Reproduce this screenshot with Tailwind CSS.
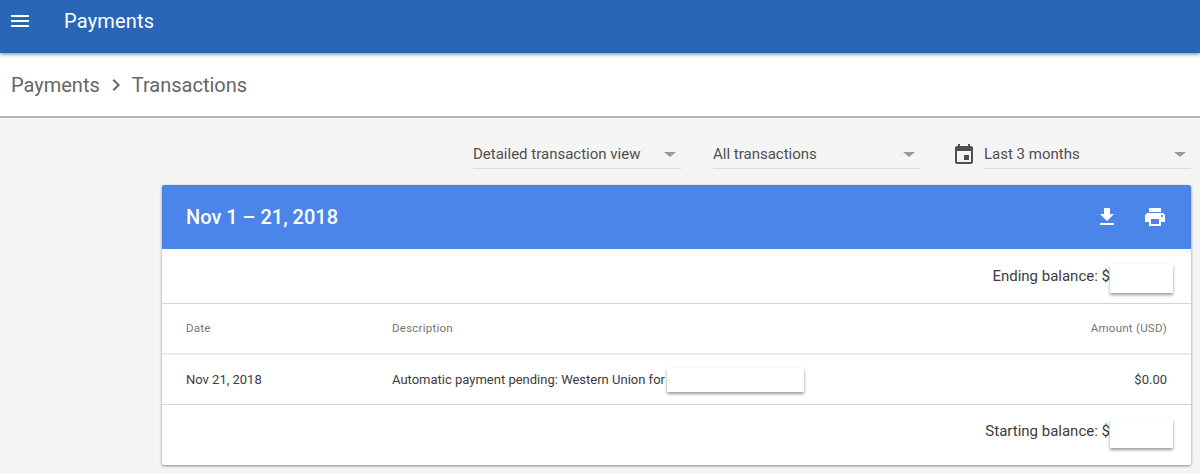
<!DOCTYPE html>
<html lang="en">
<head>
  <meta charset="UTF-8" />
  <title>Payments</title>
  <script src="https://cdn.jsdelivr.net/npm/@tailwindcss/browser@4"></script>
</head>
<body class="h-[474px] w-[1200px] overflow-hidden bg-[#f5f5f5] font-['Roboto',sans-serif]">

  <!-- App bar -->
  <header class="relative z-20 flex h-[53px] items-start bg-[#2a66b8] shadow-[0_1px_4px_rgba(0,0,0,0.5)]">
    <svg class="ml-[8px] mt-[9px] h-6 w-6" viewBox="0 0 24 24" fill="#fff"><path d="M3 18h18v-2H3v2zm0-5h18v-2H3v2zm0-7v2h18V6H3z"/></svg>
    <h1 class="ml-[32px] mt-[9px] text-[20px] leading-6 tracking-[0.2px] text-white">Payments</h1>
  </header>

  <!-- Breadcrumb -->
  <nav class="relative z-10 flex h-[65px] items-center border-b-2 border-[#b5b5b5] bg-white pl-[11px] text-[20px] text-[#666666]">
    <span>Payments</span>
    <svg class="mx-[4px] h-6 w-6" viewBox="0 0 24 24" fill="#666666"><path d="M10 6 8.600 7.400l4.600 4.600-4.600 4.600L10 18l6-6z"/></svg>
    <span>Transactions</span>
  </nav>

  <!-- Filters -->
  <div class="flex h-[67px] items-end pb-[16px] pl-[473px] text-[15px] text-[#4f4f4f]">
    <div class="flex h-[30px] w-[208px] items-center justify-between border-b border-[#dcdcdc] pt-[2px] pr-[5px]">
      <span>Detailed transaction view</span>
      <span class="h-0 w-0 border-x-[6px] border-t-[5px] border-x-transparent border-t-[#9a9a9a]"></span>
    </div>
    <div class="ml-[32px] flex h-[30px] w-[207px] items-center justify-between border-b border-[#dcdcdc] pt-[2px] pr-[5px]">
      <span>All transactions</span>
      <span class="h-0 w-0 border-x-[6px] border-t-[5px] border-x-transparent border-t-[#9a9a9a]"></span>
    </div>
    <svg class="ml-[32px] mb-[2px] h-6 w-6 self-end" viewBox="0 0 24 24" fill="#4f4f4f"><path d="M17 12h-5v5h5v-5zM16 1v2H8V1H6v2H5c-1.100 0-2 .9-2 2v14c0 1.100.9 2 2 2h14c1.100 0 2-.9 2-2V5c0-1.100-.9-2-2-2h-1V1h-2zm3 18H5V8h14v11z"/></svg>
    <div class="ml-[8px] flex h-[30px] w-[207px] items-center justify-between border-b border-[#dcdcdc] pt-[2px] pr-[5px]">
      <span>Last 3 months</span>
      <span class="h-0 w-0 border-x-[6px] border-t-[5px] border-x-transparent border-t-[#9a9a9a]"></span>
    </div>
  </div>

  <!-- Statement card -->
  <section class="ml-[162px] w-[1029px] rounded-[2px] bg-white shadow-[0_1px_3px_rgba(0,0,0,0.45)]">
    <div class="flex h-[64px] items-center justify-between rounded-t-[2px] bg-[#4c85ea] pl-[24px] pr-[24px] text-white">
      <h2 class="text-[20px] font-medium leading-6">Nov 1 – 21, 2018</h2>
      <div class="flex items-center gap-[24px]">
        <svg class="h-6 w-6" viewBox="0 0 24 24" fill="#fff"><path d="M19 9h-4V3H9v6H5l7 7 7-7zM5 18v2h14v-2H5z"/></svg>
        <svg class="h-6 w-6" viewBox="0 0 24 24" fill="#fff"><path d="M19 8H5c-1.660 0-3 1.340-3 3v6h4v4h12v-4h4v-6c0-1.660-1.340-3-3-3zm-3 11H8v-5h8v5zm3-7c-.55 0-1-.45-1-1s.45-1 1-1 1 .45 1 1-.45 1-1 1zm-1-9H6v4h12V3z"/></svg>
      </div>
    </div>

    <div class="flex h-[55px] items-center justify-end border-b border-[#d4d4d4] pr-[18px] text-[15px] text-[#3c3c3c]">
      <span class="pt-[1px]">Ending balance: $</span>
      <span class="mt-[4px] h-[29px] w-[63px] bg-white shadow-[0_2px_3px_rgba(0,0,0,0.4)]"></span>
    </div>

    <div class="flex h-[51px] items-center border-b-2 border-[#ececec] pl-[24px] pr-[24px] text-[11.500px] tracking-[0.25px] text-[#757575]">
      <span class="w-[206px]">Date</span>
      <span>Description</span>
      <span class="ml-auto">Amount (USD)</span>
    </div>

    <div class="flex h-[50px] items-center border-b border-[#d4d4d4] pl-[24px] pr-[24px] text-[13px] text-[#3c3c3c]">
      <span class="w-[206px]">Nov 21, 2018</span>
      <span>Automatic payment pending: Western Union for</span>
      <span class="ml-[2px] h-[24px] w-[137px] bg-white shadow-[0_2px_3px_rgba(0,0,0,0.4)]"></span>
      <span class="ml-auto">$0.00</span>
    </div>

    <div class="flex h-[60px] items-center justify-end pr-[18px] pb-[8px] text-[15px] text-[#3c3c3c]">
      <span>Starting balance: $</span>
      <span class="mt-[4px] h-[29px] w-[63px] bg-white shadow-[0_2px_3px_rgba(0,0,0,0.4)]"></span>
    </div>
  </section>

</body>
</html>
